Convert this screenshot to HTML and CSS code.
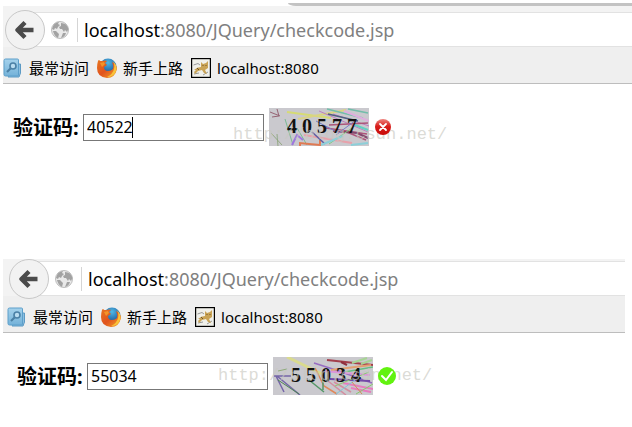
FILE: index.html
```html
<!DOCTYPE html>
<html lang="zh-CN">
<head>
<meta charset="utf-8">
<title>验证码</title>
<link rel="stylesheet" href="styles.css">
</head>
<body>
<svg class="defs" width="0" height="0" aria-hidden="true">
  <defs>
    <linearGradient id="bookGrad" x1="0" y1="0" x2="0" y2="1"><stop offset="0" stop-color="#a5d2ec"/><stop offset="1" stop-color="#74b2d9"/></linearGradient>
    <linearGradient id="foxGrad" x1="0" y1="0" x2="1" y2="1"><stop offset="0" stop-color="#e8761f"/><stop offset=".5" stop-color="#e0531d"/><stop offset="1" stop-color="#f6a72b"/></linearGradient>
    <radialGradient id="seaGrad" cx=".5" cy=".25" r=".7"><stop offset="0" stop-color="#4fb9e6"/><stop offset="1" stop-color="#14478e"/></radialGradient>
    <linearGradient id="redGrad" x1="0" y1="0" x2="0" y2="1"><stop offset="0" stop-color="#ee8580"/><stop offset=".45" stop-color="#d81f1c"/><stop offset="1" stop-color="#c80808"/></linearGradient>
    <symbol id="arrow" viewBox="0 0 20 20"><path d="M10 2.500 2.500 10 10 17.500M3.500 10H18.500" fill="none" stroke="#4b4b4b" stroke-width="4.400" stroke-linejoin="round"/></symbol>
    <symbol id="globe" viewBox="0 0 18 18">
      <circle cx="9" cy="9" r="8.500" fill="#e9e9e9" stroke="#bcbcbc"/>
      <path d="M1 8Q2 2 8 1L7 3 9 4 7 6 6 8 4 7 3 9ZM10 2Q16 2 17.500 8L16 11 14 9 13 11 11 8 9 8 8 6 10 5ZM2 10 5 10 8 13 7 17Q3 15 2 10ZM12 12 15 12Q14 16 10 17Z" fill="#a2a2a2"/>
    </symbol>
    <symbol id="book" viewBox="0 0 20 20">
      <path d="M14 6h3.500v9L16 19H5z" fill="#8dbfe0" stroke="#5c9ac4"/>
      <path d="M2.500 1h12q1 0 1 1v15q0 1-1 1h-12q-1.500 0-1.500-1.500v-14Q1 1 2.500 1Z" fill="url(#bookGrad)" stroke="#5c9fca"/>
      <circle cx="10" cy="8" r="3" fill="#b9dcf0" stroke="#4a80a6" stroke-width="1.600"/><path d="M7.500 10.500 4 14" stroke="#4a80a6" stroke-width="2.200"/>
    </symbol>
    <symbol id="fox" viewBox="0 0 20 20">
      <circle cx="11" cy="9" r="8.500" fill="url(#seaGrad)"/>
      <path d="M1 3Q2 1 3 3L6 3Q8 2 10 3L8 5 10 7 7 9Q7 13 11 13 14 13 16 11 17 8 15 4 20 7 20 11 18 20 10 20 0 19 0 10 0 6 1 3Z" fill="url(#foxGrad)"/>
      <path d="M16 3Q21 8 19 13 17 19 10 19 16 16 17 11 18 7 16 3Z" fill="#f8c33a"/>
      <path d="M3 5 7 4 8 6 5 9Z" fill="#f49427"/>
    </symbol>
    <symbol id="tomcat" viewBox="0 0 20 20">
      <rect x=".5" y=".5" width="19" height="19" fill="#f0f0ea" stroke="#000" stroke-width="1.400"/>
      <path d="M2.500 7 7 5.500 9 7M3 16 8 15M12 17 17 14" stroke="#999" fill="none"/>
      <path d="M3 12Q6 9 10 9L10 4 12 6 15 5 17 3 17 10 14 12 16 16 13 15 11 12 7 13 4 16 3 14 5 12Z" fill="#c9a355"/>
      <path d="M11.500 7.500h1M14.500 7.500h1M6 10l2 2" stroke="#70562a"/>
    </symbol>
  </defs>
</svg>

<section class="window">
  <div class="tabs"></div>
  <div class="toolbar">
    <button class="back" type="button" aria-label="后退"><svg width="20" height="20"><use href="#arrow"/></svg></button>
    <div class="address"><svg width="18" height="18"><use href="#globe"/></svg><span class="url"><b>localhost</b>:8080/JQuery/checkcode.jsp</span></div>
  </div>
  <nav class="bookmarks">
    <a href="#"><svg width="20" height="20"><use href="#book"/></svg>最常访问</a>
    <a href="#"><svg width="20" height="20"><use href="#fox"/></svg>新手上路</a>
    <a href="#"><svg width="20" height="20"><use href="#tomcat"/></svg>localhost:8080</a>
  </nav>
  <form class="check">
    <label for="code1">验证码:</label>
    <div class="field"><input id="code1" type="text" value="40522"><i class="caret"></i></div>
    <svg class="captcha" width="100" height="38" viewBox="0 0 100 38">
      <rect width="100" height="38" fill="#cac9ce"/>
      <g class="noise">
        <path d="M18 4 62 10" stroke="#d9df65" stroke-width="2"/><path d="M29 11 77 2" stroke="#ddd678" stroke-width="2"/>
        <path d="M1 4 11 8M3 9 10 8 8 1" stroke="#8d5264"/>
        <path d="M50 3 99 24M64 6 100 18" stroke="#bd73bd"/><path d="M59 6 89 13" stroke="#394f74" stroke-width="1.500"/>
        <path d="M58 1 94 10M79 1 99 5" stroke="#63bca4" stroke-width="1.500"/><path d="M75 3 100 13" stroke="#e3aae1" stroke-width="2"/>
        <path d="M16 11 24 37M28 20 38 37" stroke="#6db98a"/><path d="M2 25 13 37M8 26 9 38" stroke="#8ba477"/>
        <path d="M23 37 28 27 34 32" stroke="#9768e2" stroke-width="2"/><path d="M31 38V35L40 36 51 37V32" stroke="#e46d3e" stroke-width="2"/>
        <path d="M35 27 83 35" stroke="#ee9ba5" stroke-width="2"/><path d="M43 24 56 36" stroke="#494b9b" stroke-width="1.500"/>
        <path d="M60 17 99 15M57 20 98 26M73 22 97 32" stroke="#a8416c" stroke-width="1.500"/><path d="M64 23 88 25 99 30" stroke="#7a315b" stroke-width="2"/>
        <path d="M47 13 66 23M67 27 87 12" stroke="#6971c8"/><path d="M60 36 83 20" stroke="#71c970"/>
        <path d="M52 37 74 28M82 37 99 35" stroke="#83d1db" stroke-width="2"/><path d="M86 17 99 22" stroke="#50d3c0" stroke-width="2"/>
      </g>
      <g class="digits"><text x="18" y="25">4</text><text x="33" y="25">0</text><text x="48" y="25">5</text><text x="63" y="25">7</text><text x="78" y="25">7</text></g>
    </svg>
    <svg class="status" width="18" height="18" viewBox="0 0 18 18"><circle cx="9" cy="9" r="8" fill="url(#redGrad)"/><path d="m6 6 6 6m0-6-6 6" stroke="#fff" stroke-width="1.800" stroke-linecap="round"/></svg>
    <span class="watermark">http://blog.csdn.net/</span>
  </form>
</section>

<section class="window inset">
  <div class="toolbar">
    <button class="back" type="button" aria-label="后退"><svg width="20" height="20"><use href="#arrow"/></svg></button>
    <div class="address"><svg width="18" height="18"><use href="#globe"/></svg><span class="url"><b>localhost</b>:8080/JQuery/checkcode.jsp</span></div>
  </div>
  <nav class="bookmarks">
    <a href="#"><svg width="20" height="20"><use href="#book"/></svg>最常访问</a>
    <a href="#"><svg width="20" height="20"><use href="#fox"/></svg>新手上路</a>
    <a href="#"><svg width="20" height="20"><use href="#tomcat"/></svg>localhost:8080</a>
  </nav>
  <form class="check">
    <label for="code2">验证码:</label>
    <div class="field"><input id="code2" type="text" value="55034"></div>
    <svg class="captcha" width="100" height="38" viewBox="0 0 100 38">
      <rect width="100" height="38" fill="#cac9ce"/>
      <g class="noise">
        <path d="M14 0 49 17" stroke="#dcdd84" stroke-width="3"/><path d="M5 14 14 12" stroke="#85a66a"/>
        <path d="M1 19H18M3 19 11 35M4 19 27 38" stroke="#6755a2" stroke-width="1.500"/><path d="M5 23 26 37" stroke="#38793e"/>
        <path d="M54 3 100 8" stroke="#9d2635" stroke-width="2"/><path d="M68 5 74 8" stroke="#851425" stroke-width="2"/>
        <path d="M41 6 66 14 99 26" stroke="#8f5dc0" stroke-width="1.500"/><path d="M58 13 98 8" stroke="#e79960" stroke-width="2"/>
        <path d="M66 16 100 10" stroke="#56bd78" stroke-width="1.500"/><path d="M79 6 94 1M88 7 99 3" stroke="#a2d68c" stroke-width="2"/>
        <path d="M50 14 97 18" stroke="#de8cde" stroke-width="2"/><path d="M57 22 97 24" stroke="#6532a1" stroke-width="2"/>
        <path d="M42 11 51 29 64 37" stroke="#e47d48" stroke-width="1.500"/><path d="M36 23 51 35M50 20V33" stroke="#418f56" stroke-width="1.500"/>
        <path d="M55 24 73 38M61 25 78 35" stroke="#d68399" stroke-width="1.500"/><path d="M70 26 100 32M78 31 98 35" stroke="#ec70bc" stroke-width="2"/>
        <path d="M62 29 96 15M83 37 100 27" stroke="#7dca60"/><path d="M63 37 82 23" stroke="#73c5db"/><path d="M79 25 89 37" stroke="#d18543"/>
      </g>
      <g class="digits"><text x="18" y="25">5</text><text x="33" y="25">5</text><text x="48" y="25">0</text><text x="63" y="25">3</text><text x="78" y="25">4</text></g>
    </svg>
    <svg class="status" width="18" height="18" viewBox="0 0 18 18"><circle cx="9" cy="9" r="9" fill="#62f20f"/><path d="m4 9 4 4 6-8" fill="none" stroke="#fff" stroke-width="2" stroke-linecap="round"/></svg>
    <span class="watermark">http://blog.csdn.net/</span>
  </form>
</section>
</body>
</html>
```
FILE: styles.css
```css
* { box-sizing: border-box; }

body {
  margin: 0;
  padding: 3px 0 0 3px;
  background: #fff;
  color: #000;
  font-family: "Noto Sans", "Noto Sans CJK SC", sans-serif;
}

.defs { position: absolute; }
svg { flex: none; }

.window { overflow: hidden; }

.tabs {
  height: 3px;
  margin-left: 285px;
  border-bottom-left-radius: 8px 3px;
  background: #c3c3c3;
}

.toolbar {
  display: flex;
  align-items: center;
  padding: 6px 0 0 2px;
  background: #f3f3f3;
}

.back {
  position: relative;
  display: flex;
  align-items: center;
  justify-content: center;
  flex: none;
  width: 40px;
  height: 40px;
  margin: -3px 0;
  padding: 0;
  border: 1px solid #c8c8c8;
  border-radius: 50%;
  background: #f2f2f2;
}

.address {
  display: flex;
  align-items: center;
  flex: 1;
  height: 35px;
  margin-left: -20px;
  padding-left: 26px;
  border: solid #e2e2e2;
  border-width: 1px 0;
  background: #fff;
}

.url {
  margin-left: 8px;
  padding-left: 6px;
  border-left: 1px solid #d5d5d5;
  color: #808080;
  font-size: 18px;
  line-height: 24px;
  white-space: nowrap;
}

.url b { color: #000; font-weight: 400; }

.bookmarks {
  display: flex;
  gap: 8px;
  height: 37px;
  padding-top: 6px;
  border-bottom: 1px solid #bdbdbd;
  background: #efefef;
}

.bookmarks a {
  display: flex;
  align-items: center;
  gap: 6px;
  color: #000;
  font-size: 15px;
  line-height: 30px;
  text-decoration: none;
  white-space: nowrap;
}

.check {
  position: relative;
  display: flex;
  align-items: center;
  margin: 24px 0 113px;
  padding-left: 10px;
}

.check label {
  flex: none;
  width: 70px;
  padding-top: 2px;
  font-size: 20px;
  font-weight: 700;
  line-height: 28px;
  white-space: nowrap;
}

.field { position: relative; flex: none; }

.field input {
  display: block;
  width: 181px;
  height: 27px;
  padding: 0 3px;
  border: 1px solid #777;
  border-radius: 0;
  background: #fff;
  color: #000;
  font: 16px "Noto Sans", sans-serif;
  outline: none;
}

.caret {
  position: absolute;
  top: 3px;
  left: 49px;
  width: 1px;
  height: 21px;
  background: #000;
}

.captcha { margin: 0 5px; }

.noise { fill: none; opacity: .85; }

.digits {
  fill: #111;
  font: bold 20px "Liberation Serif", serif;
}

.status { position: relative; z-index: 2; }

.watermark {
  position: absolute;
  z-index: 1;
  top: 15px;
  left: 230px;
  color: rgba(200, 200, 192, .65);
  font: 17px/24px "Liberation Mono", monospace;
  pointer-events: none;
}

.inset { margin-right: 7px; }
.inset .toolbar { padding: 2px 0 0 6px; }
.inset .bookmarks { padding-left: 4px; }
.inset .check { margin-bottom: 24px; padding-left: 14px; }
.inset .watermark { top: 7px; left: 215px; }
```
